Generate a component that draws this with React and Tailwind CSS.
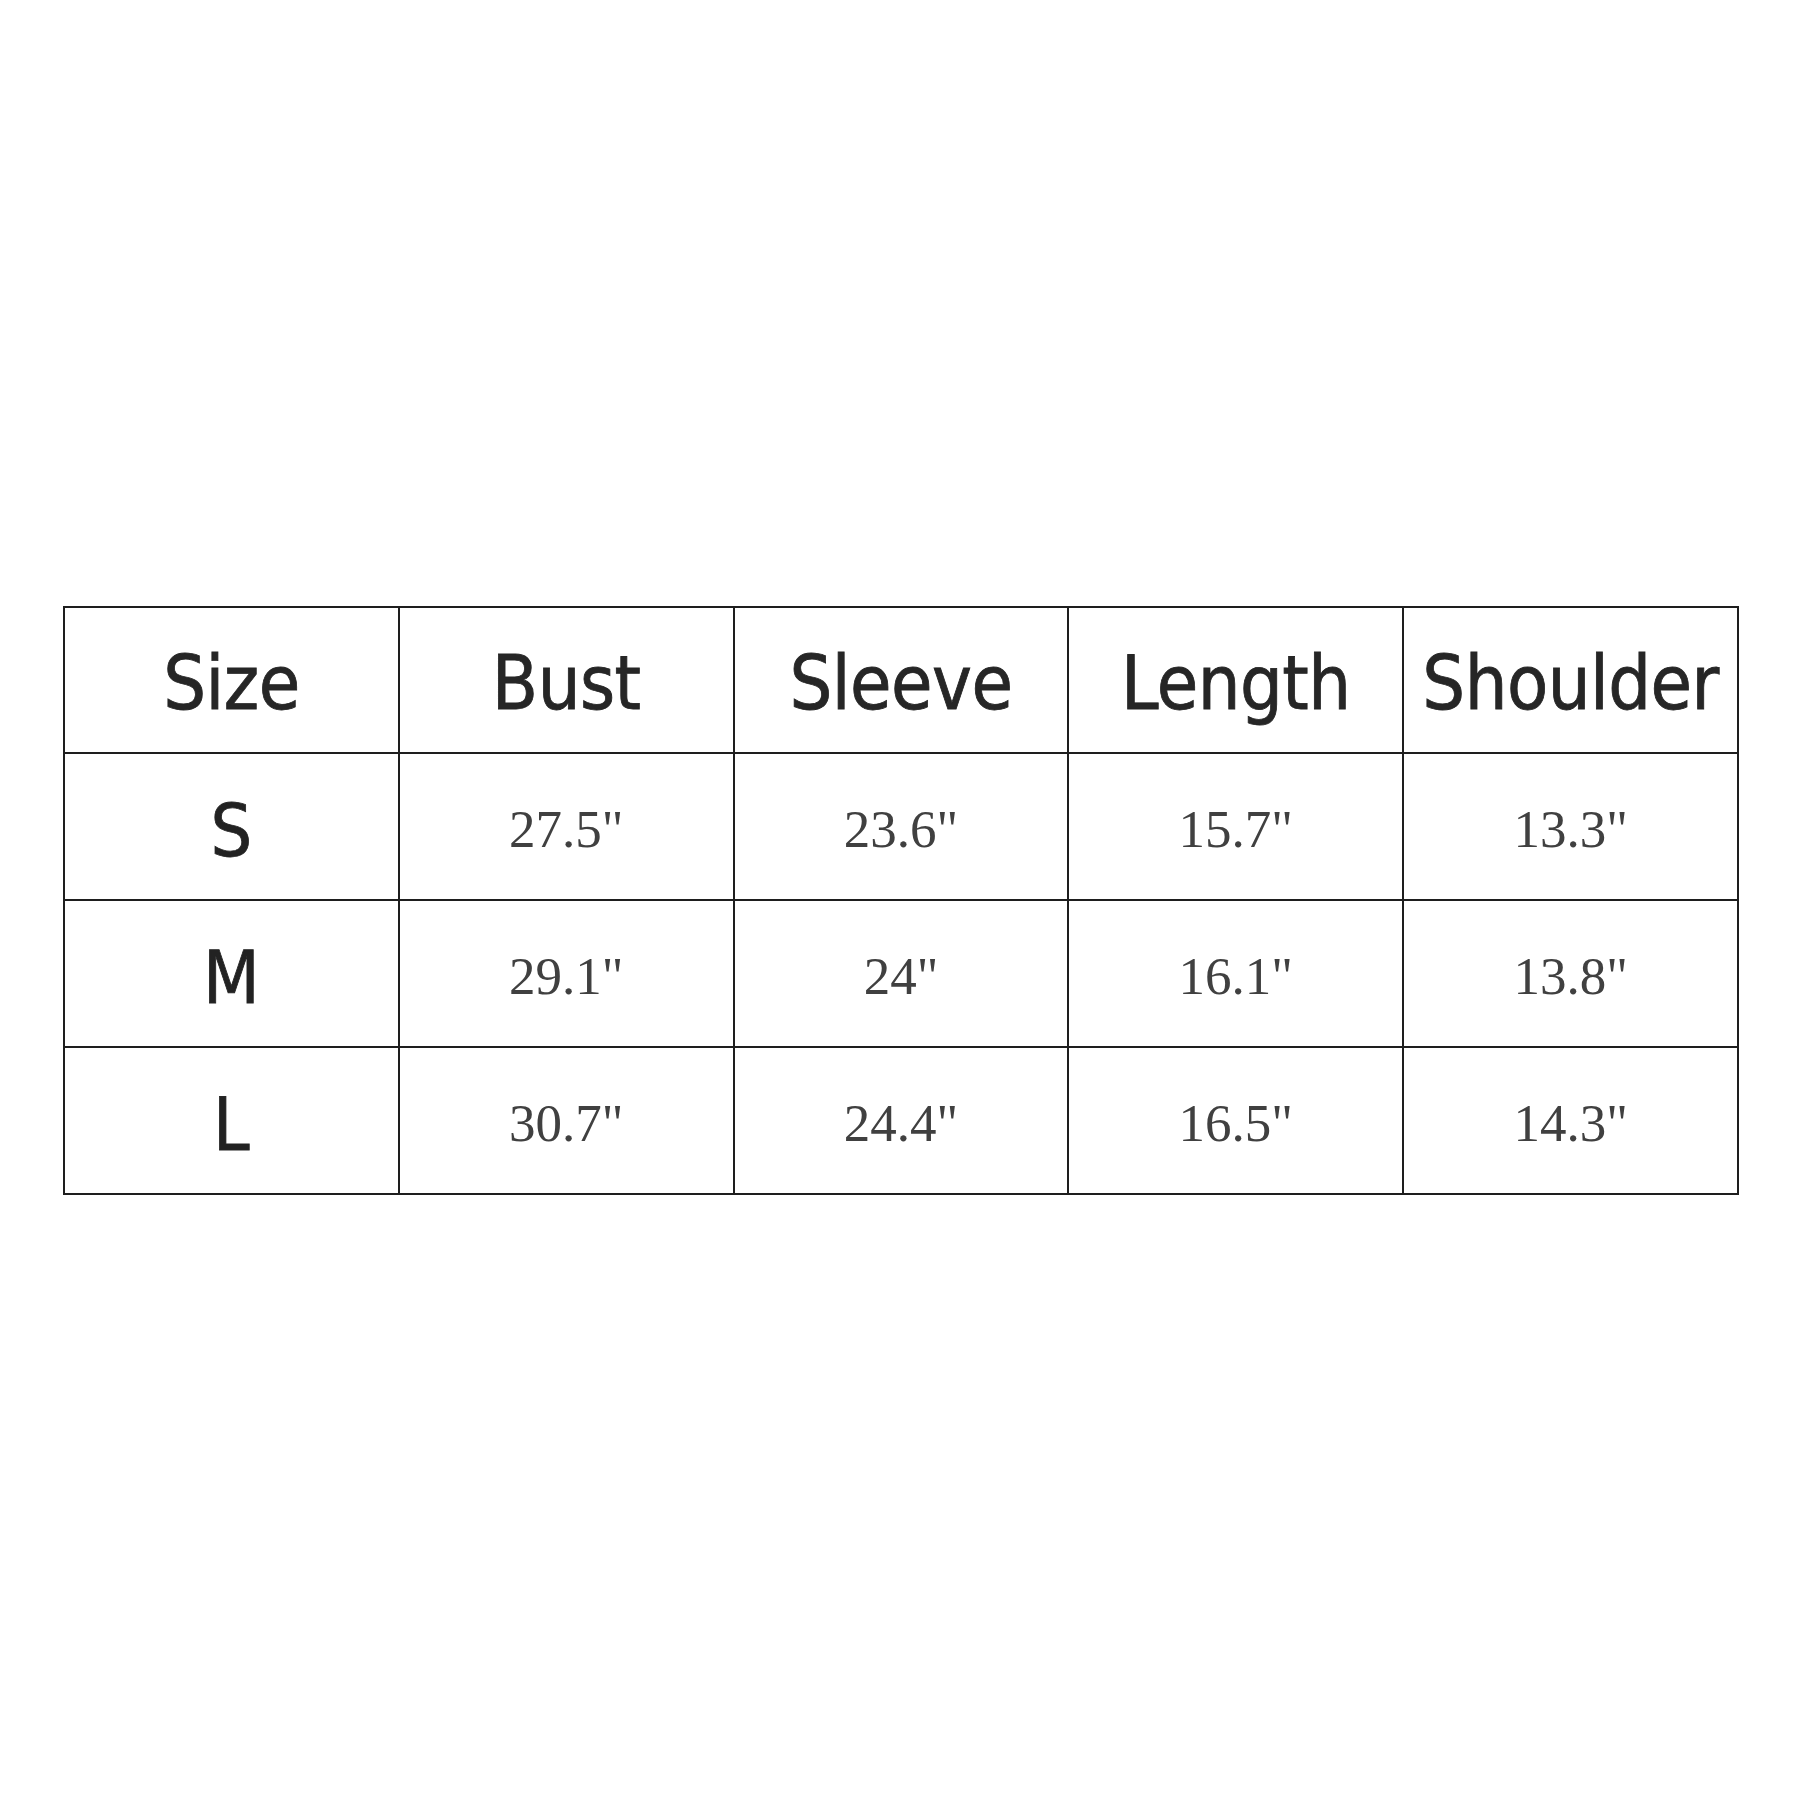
import React from "react";

const headers = ["Size", "Bust", "Sleeve", "Length", "Shoulder"];

const rows = [
  { size: "S", values: ['27.5"', '23.6"', '15.7"', '13.3"'] },
  { size: "M", values: ['29.1"', '24"', '16.1"', '13.8"'] },
  { size: "L", values: ['30.7"', '24.4"', '16.5"', '14.3"'] },
];

const sans =
  "font-['Tahoma','DejaVu_Sans',sans-serif] font-stretch-condensed [-webkit-text-stroke:0.8px_#262626]";

const App = () => {
  return (
    <div className="w-[1800px] h-[1800px] bg-white flex flex-col pt-[606px] pl-[63px]">
      <table className="w-[1676px] table-fixed border-collapse">
        <thead>
          <tr className="h-[146px]">
            {headers.map((h) => (
              <th
                key={h}
                className={`border-2 border-[#1e1e1e] text-[75px] font-normal text-[#262626] text-center leading-none pt-[6px] tracking-[-0.5px] ${sans}`}
              >
                {h}
              </th>
            ))}
          </tr>
        </thead>
        <tbody>
          {rows.map((row) => (
            <tr key={row.size} className="h-[147px]">
              <td
                className={`border-2 border-[#1e1e1e] text-[73px] text-[#222] text-center leading-none pt-[8px] ${sans}`}
              >
                {row.size}
              </td>
              {row.values.map((v, i) => (
                <td
                  key={i}
                  className="border-2 border-[#1e1e1e] text-[53px] text-[#404040] text-center leading-none pt-[6px] font-['Liberation_Serif','Times_New_Roman',serif]"
                >
                  {v}
                </td>
              ))}
            </tr>
          ))}
        </tbody>
      </table>
    </div>
  );
};

export default App;
